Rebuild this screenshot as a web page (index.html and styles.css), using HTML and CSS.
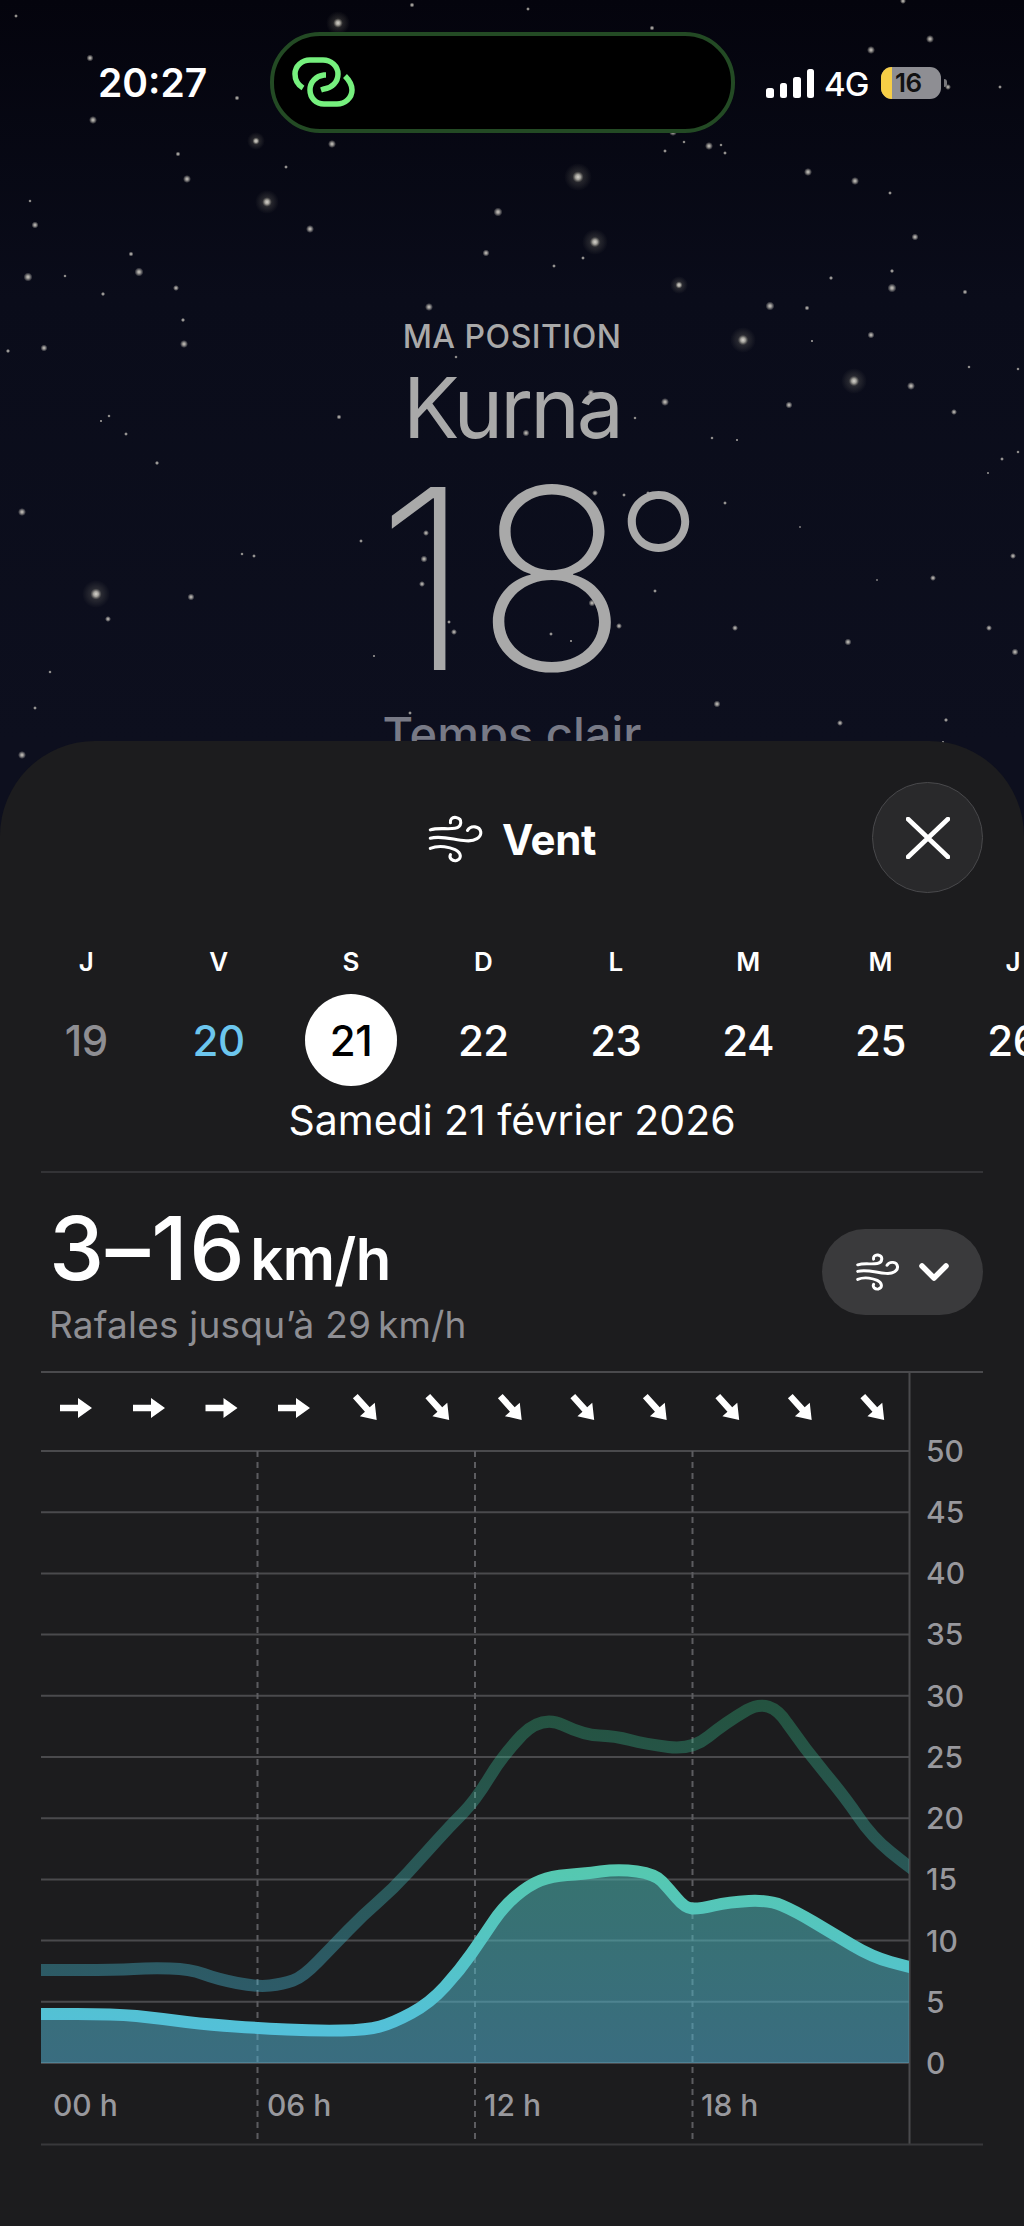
FILE: index.html

```html
<!DOCTYPE html>
<html lang="fr">
<head>
<title>Vent</title>
<meta charset="UTF-8">
<link rel="stylesheet" href="styles.css">
</head>
<body>

<svg class="defs">
  <defs>
    <radialGradient id="glow">
      <stop offset="0" stop-color="#f0ece2"/>
      <stop offset=".35" stop-color="#d8d4ca" stop-opacity=".8"/>
      <stop offset="1" stop-color="#d8d4ca" stop-opacity="0"/>
    </radialGradient>
    <radialGradient id="halo">
      <stop offset="0" stop-color="#fbf8ee"/>
      <stop offset=".18" stop-color="#e8e4d6" stop-opacity=".8"/>
      <stop offset=".4" stop-color="#a8a490" stop-opacity=".22"/>
      <stop offset="1" stop-color="#a8a490" stop-opacity="0"/>
    </radialGradient>
  </defs>
  <symbol id="wind" viewBox="88 100 180 155">
    <path d="M95 148C120 140 150 147 175 143C197 139 201 112 178 108C165 106 158 115 160 125"/>
    <path d="M95 175C130 165 170 180 210 183C240 186 260 172 258 155C255 135 225 132 215 150"/>
    <path d="M95 208C125 195 160 205 175 212C195 222 198 240 180 247C165 250 155 238 160 228"/>
  </symbol>
  <symbol id="arrow" viewBox="-17 -17 34 34">
    <path d="M-16 -3.2H2V-10L16 0L2 10V3.2H-16Z"/>
  </symbol>
</svg>

<!-- star field behind the hero -->
<svg class="stars" viewBox="0 0 1024 830">
  <g fill="url(#halo)">
    <circle cx="338" cy="23" r="12"/><circle cx="578" cy="177" r="14"/><circle cx="267" cy="202" r="12"/>
    <circle cx="595" cy="242" r="13"/><circle cx="743" cy="340" r="13"/><circle cx="854" cy="381" r="13"/>
    <circle cx="96" cy="594" r="14"/><circle cx="679" cy="285" r="9"/><circle cx="256" cy="141" r="9"/>
  </g>
  <g fill="url(#glow)">
    <circle cx="930" cy="39" r="4"/><circle cx="871" cy="50" r="4"/><circle cx="90" cy="58" r="3.5"/>
    <circle cx="93" cy="120" r="4"/><circle cx="332" cy="144" r="4"/><circle cx="187" cy="179" r="4"/>
    <circle cx="673" cy="132" r="4"/><circle cx="709" cy="146" r="4"/><circle cx="808" cy="172" r="4"/>
    <circle cx="855" cy="181" r="4"/><circle cx="498" cy="212" r="4.5"/><circle cx="310" cy="229" r="4"/>
    <circle cx="35" cy="225" r="3.5"/><circle cx="915" cy="237" r="3.5"/><circle cx="486" cy="253" r="3.5"/>
    <circle cx="139" cy="272" r="4.5"/><circle cx="28" cy="277" r="4.5"/><circle cx="892" cy="288" r="4.5"/>
    <circle cx="429" cy="307" r="4"/><circle cx="770" cy="306" r="4.5"/><circle cx="44" cy="348" r="3.5"/>
    <circle cx="184" cy="344" r="4"/><circle cx="871" cy="335" r="3.5"/><circle cx="911" cy="386" r="4"/>
    <circle cx="591" cy="393" r="3.5"/><circle cx="665" cy="402" r="4"/><circle cx="789" cy="405" r="3.5"/>
    <circle cx="526" cy="433" r="3.5"/><circle cx="954" cy="412" r="3"/><circle cx="22" cy="512" r="4"/>
    <circle cx="595" cy="493" r="3"/><circle cx="191" cy="597" r="3.5"/><circle cx="592" cy="603" r="3.5"/>
    <circle cx="108" cy="619" r="3"/><circle cx="735" cy="628" r="3"/><circle cx="989" cy="628" r="3"/>
    <circle cx="848" cy="642" r="3.5"/><circle cx="1015" cy="652" r="3.5"/><circle cx="717" cy="704" r="3.5"/>
    <circle cx="840" cy="723" r="3"/><circle cx="22" cy="755" r="4"/><circle cx="933" cy="578" r="3"/>
    <circle cx="424" cy="559" r="3.5"/><circle cx="422" cy="584" r="3"/><circle cx="454" cy="632" r="3"/>
    <circle cx="619" cy="626" r="3"/><circle cx="1013" cy="556" r="3"/><circle cx="426" cy="533" r="3"/>
  </g>
  <g fill="url(#glow)">
    <circle cx="16" cy="16" r="2"/><circle cx="412" cy="5" r="2.5"/><circle cx="528" cy="9" r="2"/>
    <circle cx="652" cy="28" r="2.5"/><circle cx="903" cy="1" r="3"/><circle cx="237" cy="98" r="2.5"/>
    <circle cx="178" cy="154" r="2.5"/><circle cx="286" cy="167" r="2"/><circle cx="684" cy="142" r="1.8"/>
    <circle cx="721" cy="145" r="1.8"/><circle cx="665" cy="151" r="2"/><circle cx="725" cy="153" r="2"/>
    <circle cx="890" cy="193" r="2"/><circle cx="1000" cy="87" r="2"/><circle cx="948" cy="87" r="3"/>
    <circle cx="30" cy="201" r="1.8"/><circle cx="131" cy="254" r="2.5"/><circle cx="583" cy="258" r="2"/>
    <circle cx="554" cy="266" r="2"/><circle cx="65" cy="276" r="1.8"/><circle cx="892" cy="271" r="2.2"/>
    <circle cx="831" cy="278" r="2.2"/><circle cx="176" cy="288" r="3"/><circle cx="103" cy="294" r="2.2"/>
    <circle cx="965" cy="292" r="2.5"/><circle cx="807" cy="308" r="2.5"/><circle cx="183" cy="320" r="2.2"/>
    <circle cx="8" cy="351" r="2.2"/><circle cx="812" cy="341" r="1.6"/><circle cx="969" cy="367" r="1.8"/>
    <circle cx="1018" cy="369" r="1.8"/><circle cx="456" cy="357" r="1.8"/><circle cx="339" cy="417" r="2.5"/>
    <circle cx="109" cy="416" r="1.8"/><circle cx="101" cy="421" r="1.6"/><circle cx="126" cy="434" r="2"/>
    <circle cx="635" cy="418" r="1.8"/><circle cx="712" cy="438" r="1.8"/><circle cx="737" cy="440" r="1.6"/>
    <circle cx="157" cy="463" r="2.2"/><circle cx="1018" cy="452" r="1.8"/><circle cx="1002" cy="459" r="2"/>
    <circle cx="988" cy="473" r="1.4"/><circle cx="624" cy="495" r="2"/><circle cx="648" cy="493" r="2"/>
    <circle cx="725" cy="503" r="2"/><circle cx="361" cy="541" r="2"/><circle cx="800" cy="527" r="1.2"/>
    <circle cx="242" cy="554" r="1.8"/><circle cx="254" cy="556" r="2"/><circle cx="877" cy="580" r="1.2"/>
    <circle cx="655" cy="591" r="2"/><circle cx="449" cy="622" r="2"/><circle cx="551" cy="634" r="2"/>
    <circle cx="571" cy="641" r="1.6"/><circle cx="374" cy="656" r="1.5"/><circle cx="50" cy="672" r="1.8"/>
    <circle cx="35" cy="708" r="2"/><circle cx="410" cy="713" r="2"/><circle cx="946" cy="720" r="2.2"/>
    <circle cx="943" cy="742" r="1.5"/>
  </g>
</svg>

<div class="top">
  <div class="status">
    <span class="time">20:27</span>
    <div class="island">
      <svg class="link" viewBox="0 0 140 120">
        <path d="M43 68C38 65 35 60 35 54C35 46 42 40 50 40H63C71 40 78 46 78 54C78 62 72 68 64 69L61 70"/>
        <path d="M85 56C89 60 92 64 92 70C92 78 85 84 77 84H64C56 84 50 78 50 70C50 62 56 56 64 55L66 55"/>
      </svg>
    </div>
    <div class="signal">
      <i class="bar b1"></i><i class="bar b2"></i><i class="bar b3"></i><i class="bar b4"></i>
    </div>
    <span class="net">4G</span>
    <div class="battery"><span class="charge"></span><span class="level">16</span></div>
    <i class="tip"></i>
  </div>

  <div class="hero">
    <div class="place-label">MA POSITION</div>
    <div class="place">Kurna</div>
    <div class="temp">18<span class="deg">°</span></div>
    <div class="cond">Temps clair</div>
  </div>
</div>

<div class="sheet">
  <div class="sheet-head">
    <svg class="wind wind-big"><use href="#wind"/></svg>
    <span class="sheet-title">Vent</span>
  </div>
  <div class="close">
    <svg viewBox="0 0 44 42"><path d="M2 2L42 40M42 2L2 40"/></svg>
  </div>

  <div class="days">
    <div class="day"><span class="dow">J</span><span class="num past">19</span></div>
    <div class="day"><span class="dow">V</span><span class="num today">20</span></div>
    <div class="day"><span class="dow">S</span><span class="num sel">21</span></div>
    <div class="day"><span class="dow">D</span><span class="num">22</span></div>
    <div class="day"><span class="dow">L</span><span class="num">23</span></div>
    <div class="day"><span class="dow">M</span><span class="num">24</span></div>
    <div class="day"><span class="dow">M</span><span class="num">25</span></div>
    <div class="day"><span class="dow">J</span><span class="num">26</span></div>
  </div>
  <div class="date">Samedi 21 février 2026</div>

  <div class="summary">
    <div>
      <div class="range">3–16<span class="unit">km/h</span></div>
      <div class="gusts">Rafales jusqu’à 29&#8239;km/h</div>
    </div>
    <div class="pill">
      <svg class="wind wind-small"><use href="#wind"/></svg>
      <svg class="chevron" viewBox="0 0 30 18"><path d="M3 3L15 15L27 3"/></svg>
    </div>
  </div>

  <!-- chart coords are page coords, the viewBox starts where the chart starts -->
  <svg class="chart" viewBox="0 1371 1024 780">
    <defs>
      <linearGradient id="lineLight" gradientUnits="userSpaceOnUse" x1="0" y1="1870" x2="0" y2="2035">
        <stop offset="0" stop-color="#55c8b0"/>
        <stop offset="1" stop-color="#53c0da"/>
      </linearGradient>
      <linearGradient id="lineDark" gradientUnits="userSpaceOnUse" x1="0" y1="1705" x2="0" y2="1990">
        <stop offset="0" stop-color="rgb(51,185,127)"/>
        <stop offset="1" stop-color="rgb(77,208,241)"/>
      </linearGradient>
      <linearGradient id="area" gradientUnits="userSpaceOnUse" x1="0" y1="1870" x2="0" y2="2063">
        <stop offset="0" stop-color="rgb(77,186,179)"/>
        <stop offset="1" stop-color="rgb(82,175,208)"/>
      </linearGradient>
      <clipPath id="plot"><rect x="41" y="1371" width="868" height="773"/></clipPath>
    </defs>

    <g class="grid">
      <path d="M41 1372H983"/>
      <path d="M41 1451H909M41 1512.2H909M41 1573.4H909M41 1634.6H909M41 1695.8H909M41 1757H909M41 1818.2H909M41 1879.4H909M41 1940.6H909M41 2001.8H909M41 2063H909"/>
      <path d="M909.5 1371V2144"/>
      <path class="base" d="M41 2144.5H983"/>
    </g>
    <path class="dash" d="M257.5 1451V2140M475 1451V2140M692.5 1451V2140"/>

    <g clip-path="url(#plot)">
      <path class="gust" d="M30 1970L79 1970Q117 1970 133.5 1969Q150 1968 170 1968.5Q190 1969 203.5 1974Q217 1979 237 1983Q257 1987 270 1985.5Q283 1984 293 1980.5Q303 1977 318 1961.5Q333 1946 348 1930.5Q363 1915 378 1902Q393 1889 408 1872.5Q423 1856 436.5 1841Q450 1826 462.5 1813.5Q475 1801 489 1778Q503 1755 522 1735Q542 1715 563 1725Q584 1735 599.5 1735.5Q615 1736 630 1740Q645 1744 668.5 1747Q692 1750 708.5 1736.5Q725 1723 747 1710Q770 1697 787 1723Q805 1749 825 1773Q845 1797 858.5 1817Q872 1837 890.5 1852Q909 1867 925 1878"/>
      <path class="fill" d="M30 2014L77 2014Q113 2014 136.5 2016Q160 2018.5 186.5 2022Q213 2025 235 2026.5Q257 2028 287 2029.5Q317 2031 342 2030.5Q367 2030 380 2026.5Q393 2023 411.5 2013Q430 2003 445 1986.5Q460 1970 471.5 1953.5Q483 1937 493 1922Q503 1907 516 1896Q529 1885 540.5 1880.5Q552 1876 567 1875Q582 1874 600.5 1871.5Q619 1869 637 1871.5Q655 1874 662 1881.5Q669 1889 677 1898.5Q685 1908 692 1908.5Q699 1909 714 1905.5Q729 1902 749 1901Q769 1900 782 1905.5Q795 1911 813.5 1922Q832 1933 852 1945Q872 1957 890.5 1962Q909 1967 925 1971V2063H30Z"/>
      <path class="wind-line" d="M30 2014L77 2014Q113 2014 136.5 2016Q160 2018.5 186.5 2022Q213 2025 235 2026.5Q257 2028 287 2029.5Q317 2031 342 2030.5Q367 2030 380 2026.5Q393 2023 411.5 2013Q430 2003 445 1986.5Q460 1970 471.5 1953.5Q483 1937 493 1922Q503 1907 516 1896Q529 1885 540.5 1880.5Q552 1876 567 1875Q582 1874 600.5 1871.5Q619 1869 637 1871.5Q655 1874 662 1881.5Q669 1889 677 1898.5Q685 1908 692 1908.5Q699 1909 714 1905.5Q729 1902 749 1901Q769 1900 782 1905.5Q795 1911 813.5 1922Q832 1933 852 1945Q872 1957 890.5 1962Q909 1967 925 1971"/>
    </g>

    <g class="dirs">
      <use href="#arrow" x="59" y="1391" width="34" height="34"/>
      <use href="#arrow" x="132" y="1391" width="34" height="34"/>
      <use href="#arrow" x="204.5" y="1391" width="34" height="34"/>
      <use href="#arrow" x="277" y="1391" width="34" height="34"/>
      <use href="#arrow" transform="rotate(48 366 1408)" x="349" y="1391" width="34" height="34"/>
      <use href="#arrow" transform="rotate(48 438.5 1408)" x="421.5" y="1391" width="34" height="34"/>
      <use href="#arrow" transform="rotate(48 511 1408)" x="494" y="1391" width="34" height="34"/>
      <use href="#arrow" transform="rotate(48 583.5 1408)" x="566.5" y="1391" width="34" height="34"/>
      <use href="#arrow" transform="rotate(48 656 1408)" x="639" y="1391" width="34" height="34"/>
      <use href="#arrow" transform="rotate(48 728.5 1408)" x="711.5" y="1391" width="34" height="34"/>
      <use href="#arrow" transform="rotate(48 801 1408)" x="784" y="1391" width="34" height="34"/>
      <use href="#arrow" transform="rotate(48 873.5 1408)" x="856.5" y="1391" width="34" height="34"/>
    </g>

    <g class="axis">
      <text x="926" y="1462">50</text>
      <text x="926" y="1523">45</text>
      <text x="926" y="1584">40</text>
      <text x="926" y="1645">35</text>
      <text x="926" y="1707">30</text>
      <text x="926" y="1768">25</text>
      <text x="926" y="1829">20</text>
      <text x="926" y="1890">15</text>
      <text x="926" y="1952">10</text>
      <text x="926" y="2013">5</text>
      <text x="926" y="2074">0</text>
      <text x="53" y="2116">00 h</text>
      <text x="267" y="2116">06 h</text>
      <text x="484" y="2116">12 h</text>
      <text x="701" y="2116">18 h</text>
    </g>
  </svg>
</div>

</body>
</html>
```

FILE: styles.css

```css
html, body {
  margin: 0;
  padding: 0;
  width: 1024px;
  height: 2226px;
  overflow: hidden;
  background: linear-gradient(#04040d 0, #0a0c1a 300px, #0d0f1e 741px);
  font-family: Inter, "Noto Sans", "Liberation Sans", sans-serif;
}

body {
  position: relative;
}

.defs {
  position: absolute;
  width: 0;
  height: 0;
}

.stars {
  position: absolute;
  left: 0;
  top: 0;
  width: 1024px;
  height: 830px;
  opacity: 0.85;
}

.top {
  position: relative;
  height: 741px;
  overflow: hidden;
}

/* status bar */
.status {
  display: flex;
  align-items: center;
  height: 101px;
  padding-top: 32px;
  padding-left: 98px;
}

.time {
  width: 172px;
  color: #fff;
  font-size: 39px;
  font-weight: 600;
  letter-spacing: 0;
}

.island {
  box-sizing: border-box;
  width: 465px;
  height: 101px;
  margin-right: 31px;
  background: #000;
  border: 4px solid #234a24;
  border-radius: 50px;
}

.link {
  display: block;
  width: 140px;
  height: 120px;
  margin: -16px 0 0 -14px;
  fill: none;
  stroke: #76f07e;
  stroke-width: 5.5;
}

.signal {
  display: flex;
  align-items: flex-end;
  gap: 6px;
  height: 29px;
  margin-right: 10px;
  margin-top: 1px;
}

.bar {
  width: 7.5px;
  background: #fff;
  border-radius: 2.5px;
}
.b1 { height: 10px; }
.b2 { height: 15px; }
.b3 { height: 21px; }
.b4 { height: 29px; }

.net {
  color: #fff;
  font-size: 33px;
  font-weight: 500;
  width: 57px;
  margin-top: 2px;
  letter-spacing: -0.8px;
}

.battery {
  position: relative;
  width: 60px;
  height: 32px;
  background: #8e8e93;
  border-radius: 11px;
  overflow: hidden;
  display: flex;
  align-items: center;
}

.charge {
  width: 11px;
  height: 100%;
  background: #f7ce46;
}

.level {
  margin-left: 3px;
  color: #111;
  font-size: 26px;
  font-weight: 600;
  letter-spacing: -0.5px;
}

.tip {
  width: 3px;
  height: 8px;
  margin-left: 3px;
  background: #77777b;
  border-radius: 0 4px 4px 0;
}

/* location block */
.hero {
  display: flex;
  flex-direction: column;
  align-items: center;
  color: #a9a9a9;
  position: relative;
}

.place-label {
  margin-top: 186px;
  font-size: 32px;
  line-height: 36px;
  font-weight: 500;
  letter-spacing: 0.5px;
}

.place {
  margin-top: 5px;
  font-size: 84px;
  line-height: 96px;
  font-weight: 400;
  letter-spacing: -3px;
}

.temp {
  margin-top: -13px;
  font-size: 252px;
  line-height: 272px;
  font-weight: 200;
  letter-spacing: 4px;
  padding-left: 56px;
}

.deg {
  margin-left: -19px;
  font-size: 200px;
  line-height: 0;
  vertical-align: 32px;
  letter-spacing: 0;
}

.cond {
  margin-top: -9px;
  color: #787a86;
  font-size: 47px;
  line-height: 56px;
  font-weight: 500;
}

/* bottom sheet */
.sheet {
  position: relative;
  height: 1485px;
  overflow: hidden;
  background: #1c1c1e;
  border-radius: 95px 95px 0 0;
}

.sheet-head {
  display: flex;
  justify-content: center;
  align-items: center;
  gap: 18px;
  height: 196px;
  margin-bottom: 9px;
}

.sheet-title {
  color: #fff;
  font-size: 42px;
  font-weight: 700;
  letter-spacing: -0.3px;
}

.wind {
  fill: none;
  stroke: #fff;
  stroke-linecap: round;
}

.wind-big {
  width: 56px;
  height: 48px;
  stroke-width: 10;
}

.wind-small {
  width: 44px;
  height: 38px;
  stroke-width: 12;
}

/* sits over the title row */
.close {
  position: absolute;
  right: 41px;
  top: 41px;
  box-sizing: border-box;
  width: 111px;
  height: 111px;
  background: #29292b;
  border: 1.5px solid #49494c;
  border-radius: 50%;
  display: flex;
  align-items: center;
  justify-content: center;
}

.close svg {
  width: 44px;
  height: 42px;
  fill: none;
  stroke: #fff;
  stroke-width: 4.6;
  stroke-linecap: round;
}

.days {
  display: grid;
  grid-template-columns: repeat(8, 132.4px);
  margin-left: 20px;
  width: 1100px;
}

.day {
  display: flex;
  flex-direction: column;
  align-items: center;
}

.dow {
  color: #fff;
  font-size: 26px;
  line-height: 32px;
  font-weight: 600;
}

.num {
  width: 92px;
  height: 92px;
  margin-top: 16px;
  display: flex;
  align-items: center;
  justify-content: center;
  color: #fff;
  font-size: 42px;
  font-weight: 500;
  letter-spacing: -0.5px;
}

.past { color: #8e8e93; }
.today { color: #6cc6ee; }

.sel {
  background: #fff;
  color: #000;
  border-radius: 50%;
}

.date {
  color: #fff;
  text-align: center;
  font-size: 41px;
  line-height: 50px;
  margin-top: 9px;
}

.summary {
  display: flex;
  justify-content: space-between;
  align-items: flex-start;
  margin: 26px 41px 0;
  padding: 31px 0 0 8px;
  height: 200px;
  box-sizing: border-box;
  border-top: 2px solid #333336;
}

.range {
  color: #fff;
  font-size: 88px;
  line-height: 88px;
  font-weight: 500;
  letter-spacing: 1.5px;
}

.unit {
  margin-left: 4px;
  font-size: 58px;
  font-weight: 600;
  letter-spacing: -0.5px;
}

.gusts {
  color: #8e8e93;
  font-size: 37px;
  line-height: 44px;
  margin-top: 0;
  letter-spacing: 0.2px;
}

.pill {
  width: 161px;
  height: 86px;
  margin-top: 25px;
  background: #3a3a3c;
  border-radius: 43px;
  display: flex;
  align-items: center;
  justify-content: center;
  gap: 19px;
}

.chevron {
  width: 30px;
  height: 18px;
  fill: none;
  stroke: #fff;
  stroke-width: 5.5;
  stroke-linecap: round;
  stroke-linejoin: round;
}

/* chart */
.chart {
  display: block;
  width: 1024px;
  height: 780px;
}

.grid path {
  fill: none;
  stroke: #4a4a4d;
  stroke-width: 2;
}

.grid .base {
  stroke: #38383b;
}

.dash {
  fill: none;
  stroke: #5c5c60;
  stroke-width: 2;
  stroke-dasharray: 6 5;
}

.gust {
  fill: none;
  stroke: url(#lineDark);
  stroke-width: 12;
  stroke-opacity: 0.35;
  stroke-linejoin: round;
}

.fill {
  fill: url(#area);
  fill-opacity: 0.55;
}

.wind-line {
  fill: none;
  stroke: url(#lineLight);
  stroke-width: 12;
  stroke-linejoin: round;
}

.dirs {
  fill: #fff;
}

.axis text {
  fill: #98989d;
  font-size: 30px;
  font-weight: 500;
}
```
